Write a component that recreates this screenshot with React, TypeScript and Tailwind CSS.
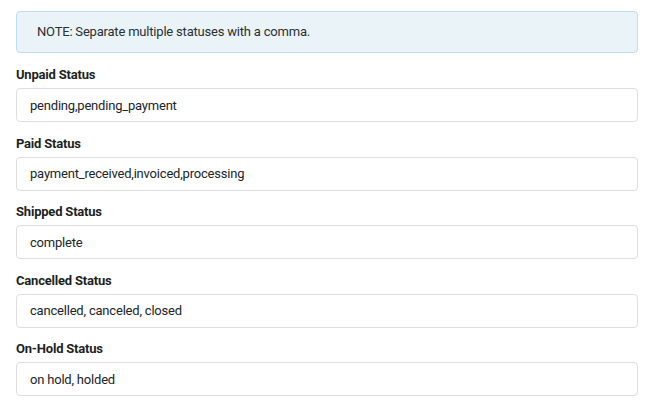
const fields = [
  { label: 'Unpaid Status', value: 'pending,pending_payment' },
  { label: 'Paid Status', value: 'payment_received,invoiced,processing' },
  { label: 'Shipped Status', value: 'complete' },
  { label: 'Cancelled Status', value: 'cancelled, canceled, closed' },
  { label: 'On-Hold Status', value: 'on hold, holded' },
];

export default function App() {
  return (
    <div className="w-[658px] h-[408px] bg-white pl-4 pr-5 pt-[11px] text-[#212529]" style={{ fontFamily: 'Roboto, "Liberation Sans", sans-serif' }}>
      <div className="h-[42px] flex items-center px-5 rounded border border-[#bee0ea] bg-[#eaf4f8] text-[13px] tracking-[-0.2px] text-[#2b2f33]">
        NOTE: Separate multiple statuses with a comma.
      </div>
      <div className="mt-3 flex flex-col gap-[11.5px]">
        {fields.map((f) => (
          <div key={f.label} className="flex flex-col">
            <label className="text-[13px] font-bold leading-5 tracking-[-0.2px] text-[#1d1f22]">{f.label}</label>
            <input
              readOnly
              value={f.value}
              className="mt-[3px] h-[34px] w-full rounded border border-[#dedede] bg-white px-[13px] text-[13px] tracking-[-0.2px] text-[#212529] outline-none"
              style={{ fontFamily: 'Roboto, "Liberation Sans", sans-serif' }}
            />
          </div>
        ))}
      </div>
    </div>
  );
}
